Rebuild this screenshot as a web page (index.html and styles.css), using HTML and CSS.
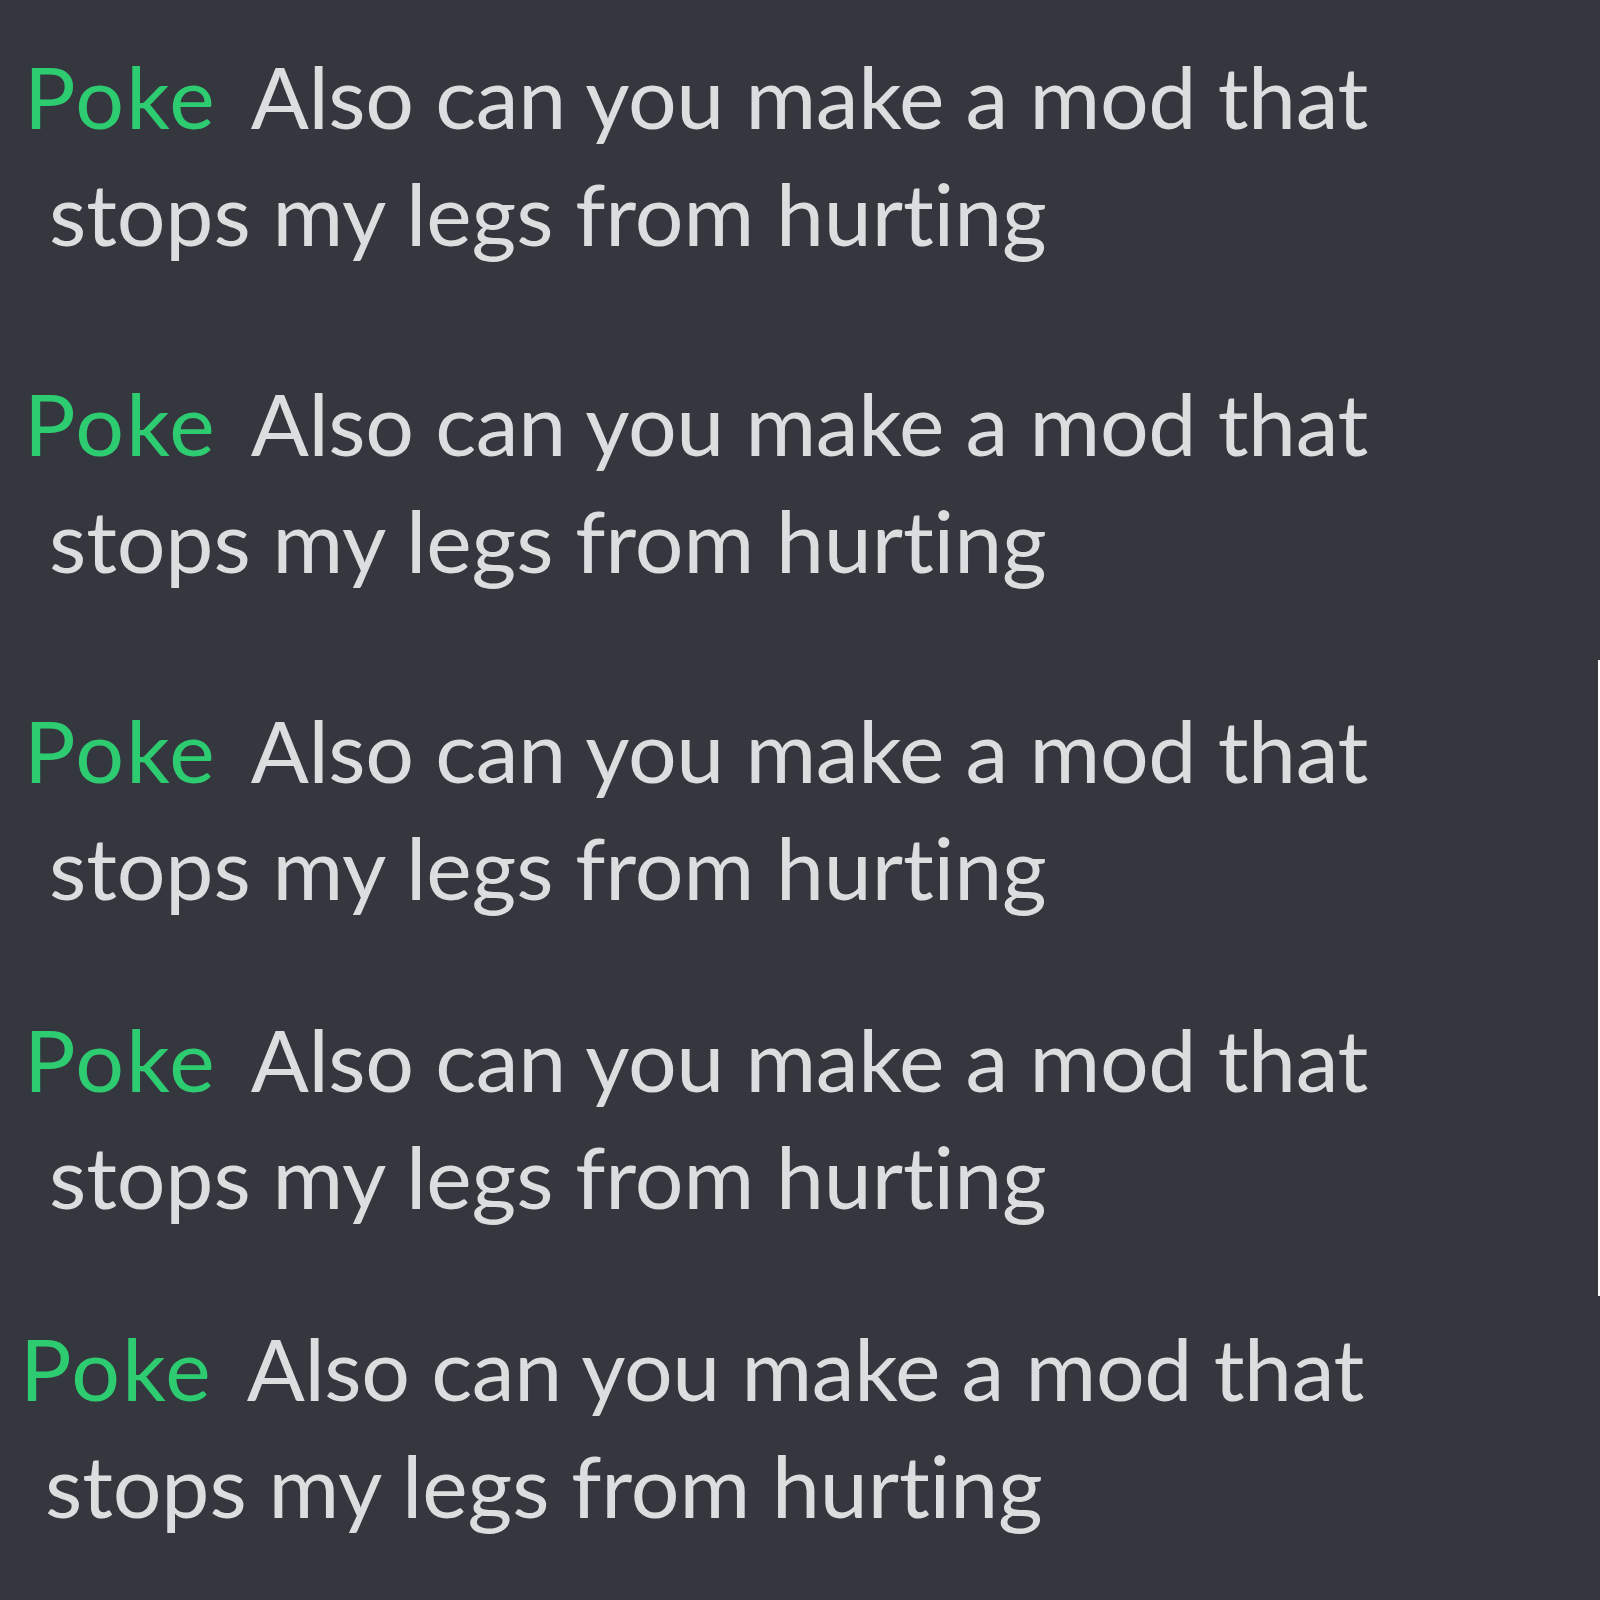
FILE: index.html
```html
<!DOCTYPE html>
<html lang="en">
<head>
  <meta charset="UTF-8">
  <title>Poke</title>
  <link rel="stylesheet" href="styles.css">
</head>
<body>
  <div class="chat">
    <div class="message wide">
      <div class="line"><span class="username">Poke</span>Also can you make a mod that</div>
      <div class="line wrap">stops my legs from hurting</div>
    </div>
    <div class="message wide">
      <div class="line"><span class="username">Poke</span>Also can you make a mod that</div>
      <div class="line wrap">stops my legs from hurting</div>
    </div>
    <div class="message">
      <div class="line"><span class="username">Poke</span>Also can you make a mod that</div>
      <div class="line wrap">stops my legs from hurting</div>
    </div>
    <div class="message">
      <div class="line"><span class="username">Poke</span>Also can you make a mod that</div>
      <div class="line wrap">stops my legs from hurting</div>
    </div>
    <div class="message shifted">
      <div class="line"><span class="username">Poke</span>Also can you make a mod that</div>
      <div class="line wrap">stops my legs from hurting</div>
    </div>
  </div>
  <div class="edge"></div>
</body>
</html>
```

FILE: styles.css
```css
html, body {
  margin: 0;
  height: 100%;
}

body {
  background-color: #34373e;
  font-family: Lato, "Open Sans", sans-serif;
  color: #dcddde;
  position: relative;
  overflow: hidden;
}

.chat {
  padding: 37px 0 0 24px;
}

.message {
  font-size: 86px;
  line-height: 117px;
  white-space: nowrap;
  letter-spacing: -0.4px;
  font-variant-ligatures: none;
  margin-bottom: 75px;
}

.message.wide {
  margin-bottom: 93px;
}

.message.shifted {
  margin-left: -4px;
}

.username {
  color: #2ecc71;
  letter-spacing: 2px;
  margin-right: 34px;
}

.line.wrap {
  padding-left: 25px;
  letter-spacing: -0.1px;
}

.edge {
  position: absolute;
  right: 0;
  top: 660px;
  width: 2px;
  height: 636px;
  background-color: #ffffff;
}
```
